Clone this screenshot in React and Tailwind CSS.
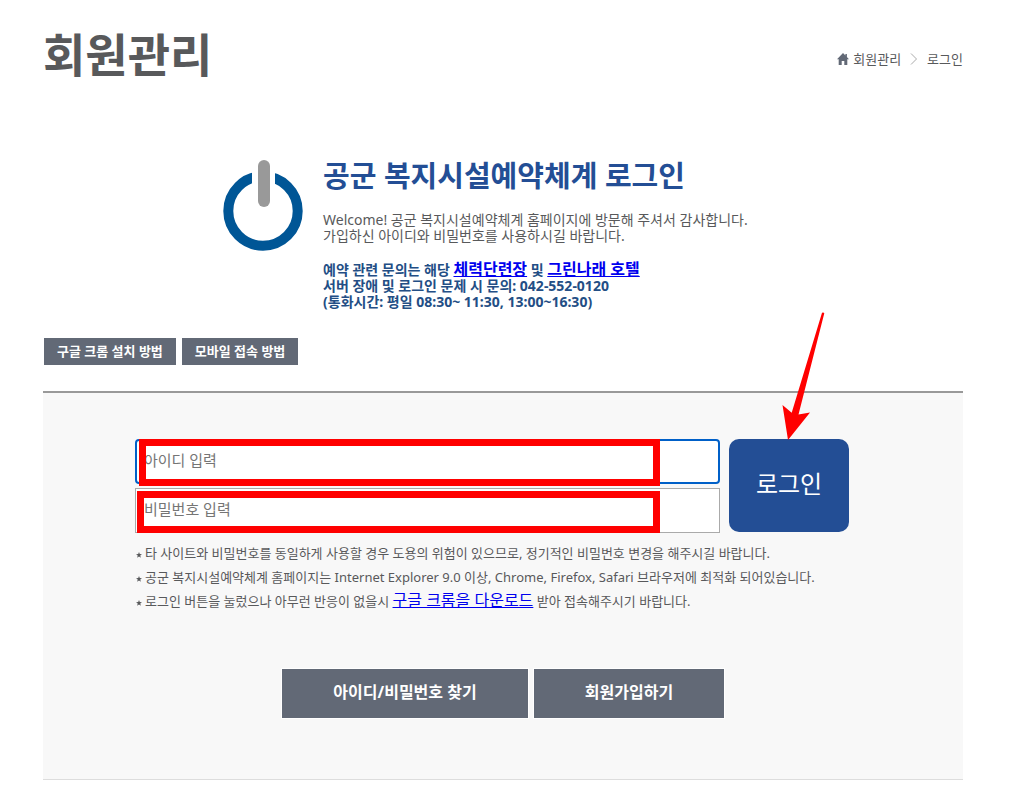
import React, { useState } from "react";

const notes = [
  "타 사이트와 비밀번호를 동일하게 사용할 경우 도용의 위험이 있으므로, 정기적인 비밀번호 변경을 해주시길 바랍니다.",
  "공군 복지시설예약체계 홈페이지는 Internet Explorer 9.0 이상, Chrome, Firefox, Safari 브라우저에 최적화 되어있습니다.",
];

const HomeIcon = () => (
  <svg className="h-3 w-3" viewBox="0 0 12 12" aria-hidden="true">
    <path
      d="M6 0 0 6.2h1.7V12h3V8h2.6v4h3V6.2H12L9.9 4V1H8.4v1.5z"
      fill="#626976"
    />
  </svg>
);

const PowerIcon = () => (
  <svg
    className="h-[91px] w-20 flex-shrink-0"
    viewBox="0 0 80 91"
    aria-hidden="true"
  >
    <circle cx="40" cy="51" r="34.7" fill="none" stroke="#005696" strokeWidth="10" />
    <rect x="29" y="8" width="23" height="24" fill="#fff" />
    <rect x="35" y="0" width="12" height="47" rx="6" fill="#999" />
  </svg>
);

const Note = ({ children }) => (
  <li className="flex items-center whitespace-nowrap">
    <svg className="mt-1 mr-[3px] h-[6px] w-[6px]" viewBox="0 0 10 10" aria-hidden="true">
      <path
        d="M5 0 6.3 3.5 10 3.7 7.1 6 8.1 9.7 5 7.6 1.9 9.7 2.9 6 0 3.7l3.7-.2z"
        fill="#58595b"
      />
    </svg>
    <span>{children}</span>
  </li>
);

const App = () => {
  const [userId, setUserId] = useState("");
  const [password, setPassword] = useState("");

  return (
    <div className="bg-white pt-6 pr-[50px] pb-8 pl-[43px] font-['Noto_Sans','Noto_Sans_CJK_KR',sans-serif] text-[#58595b]">
      {/* Title and breadcrumb */}
      <header className="flex items-center justify-between">
        <h1 className="text-[46px] leading-[60px] font-bold">회원관리</h1>
        <nav className="flex items-center pt-[10px] text-[13px] leading-6">
          <HomeIcon />
          <a href="#member" className="ml-1">
            회원관리
          </a>
          <svg className="mx-[9px] h-3 w-2" viewBox="0 0 8 12" aria-hidden="true">
            <path d="M1 .5 6.5 6 1 11.5" fill="none" stroke="#aaa" />
          </svg>
          <a href="#login">로그인</a>
        </nav>
      </header>

      {/* Intro */}
      <section className="mt-[76px] flex gap-5 pl-[180px]">
        <PowerIcon />
        <div className="whitespace-nowrap">
          <h2 className="text-[29px] leading-8 font-bold text-[#234e95]">
            공군 복지시설예약체계 로그인
          </h2>
          <p className="mt-5 text-[14px] leading-4">
            Welcome! 공군 복지시설예약체계 홈페이지에 방문해 주셔서 감사합니다.
            <br />
            가입하신 아이디와 비밀번호를 사용하시길 바랍니다.
          </p>
          <p className="mt-[18px] text-[14px] leading-4 font-bold text-[#234e85]">
            예약 관련 문의는 해당{" "}
            <a href="#gym" className="text-[16px] leading-3 text-[#0000ee] underline">
              체력단련장
            </a>{" "}
            및{" "}
            <a href="#hotel" className="text-[16px] leading-3 text-[#0000ee] underline">
              그린나래 호텔
            </a>
            <br />
            서버 장애 및 로그인 문제 시 문의: 042-552-0120
            <br />
            (통화시간: 평일 08:30~ 11:30, 13:00~16:30)
          </p>
        </div>
      </section>

      <div className="mt-7 flex gap-[6px] pl-px text-[13px] leading-[27px] font-bold text-white">
        <button className="bg-[#626976] px-[13px]">구글 크롬 설치 방법</button>
        <button className="bg-[#626976] px-[13px]">모바일 접속 방법</button>
      </div>

      {/* Login panel */}
      <main className="mt-[26px] border-t-2 border-b border-t-[#999] border-b-[#ddd] bg-[#f8f8f8] pt-[46px] pb-[60px]">
        <form
          className="flex gap-[9px] pr-[114px] pl-[92px]"
          onSubmit={(e) => e.preventDefault()}
        >
          <div className="flex flex-1 flex-col gap-1">
            <div className="relative">
              <input
                type="text"
                aria-label="아이디"
                placeholder="아이디 입력"
                value={userId}
                onChange={(e) => setUserId(e.target.value)}
                className="block h-[45px] w-full rounded border-2 border-[#0060c8] bg-white px-[7px] pb-[3px] text-[15px] outline-none placeholder:text-[#757575]"
              />
              <div className="pointer-events-none absolute top-0 right-[60px] -bottom-[2px] left-1 border-[7px] border-[#ff0000]" />
            </div>
            <div className="relative">
              <input
                type="password"
                aria-label="비밀번호"
                placeholder="비밀번호 입력"
                value={password}
                onChange={(e) => setPassword(e.target.value)}
                className="block h-[45px] w-full border border-[#aaa] bg-white px-2 pb-[3px] text-[15px] outline-none placeholder:text-[#757575]"
              />
              <div className="pointer-events-none absolute top-[3px] right-[60px] bottom-0 left-[2px] border-[7px] border-[#ff0000]" />
            </div>
          </div>
          <div className="relative">
            <button
              type="submit"
              className="h-[93px] w-[120px] rounded-[10px] bg-[#234e95] pb-[3px] text-[24px] text-white"
            >
              로그인
            </button>
            {/* Arrow pointing at the login button */}
            <svg
              className="pointer-events-none absolute -top-[129px] left-[51px] h-[130px] w-[46px]"
              viewBox="0 0 46 130"
              aria-hidden="true"
            >
              <path
                d="M8 130 2.5 95l9.2 7.8L42 2.8q1.4-1 2.3.4L18.5 104.500 30 102.500z"
                fill="#ff0000"
              />
            </svg>
          </div>
        </form>

        <ul className="mt-2 pl-[93px] text-[13px] leading-6">
          {notes.map((note) => (
            <Note key={note}>{note}</Note>
          ))}
          <Note>
            로그인 버튼을 눌렀으나 아무런 반응이 없을시{" "}
            <a href="#chrome" className="text-[16px] leading-4 text-[#0000ee] underline">
              구글 크롬을 다운로드
            </a>{" "}
            받아 접속해주시기 바랍니다.
          </Note>
        </ul>

        <div className="mt-[55px] flex justify-center gap-1 text-[16px] font-bold text-white">
          <button className="h-[51px] w-[248px] border border-white bg-[#626976] pb-[3px]">
            아이디/비밀번호 찾기
          </button>
          <button className="h-[51px] w-[192px] border border-white bg-[#626976] pb-[3px]">
            회원가입하기
          </button>
        </div>
      </main>
    </div>
  );
};

export default App;
